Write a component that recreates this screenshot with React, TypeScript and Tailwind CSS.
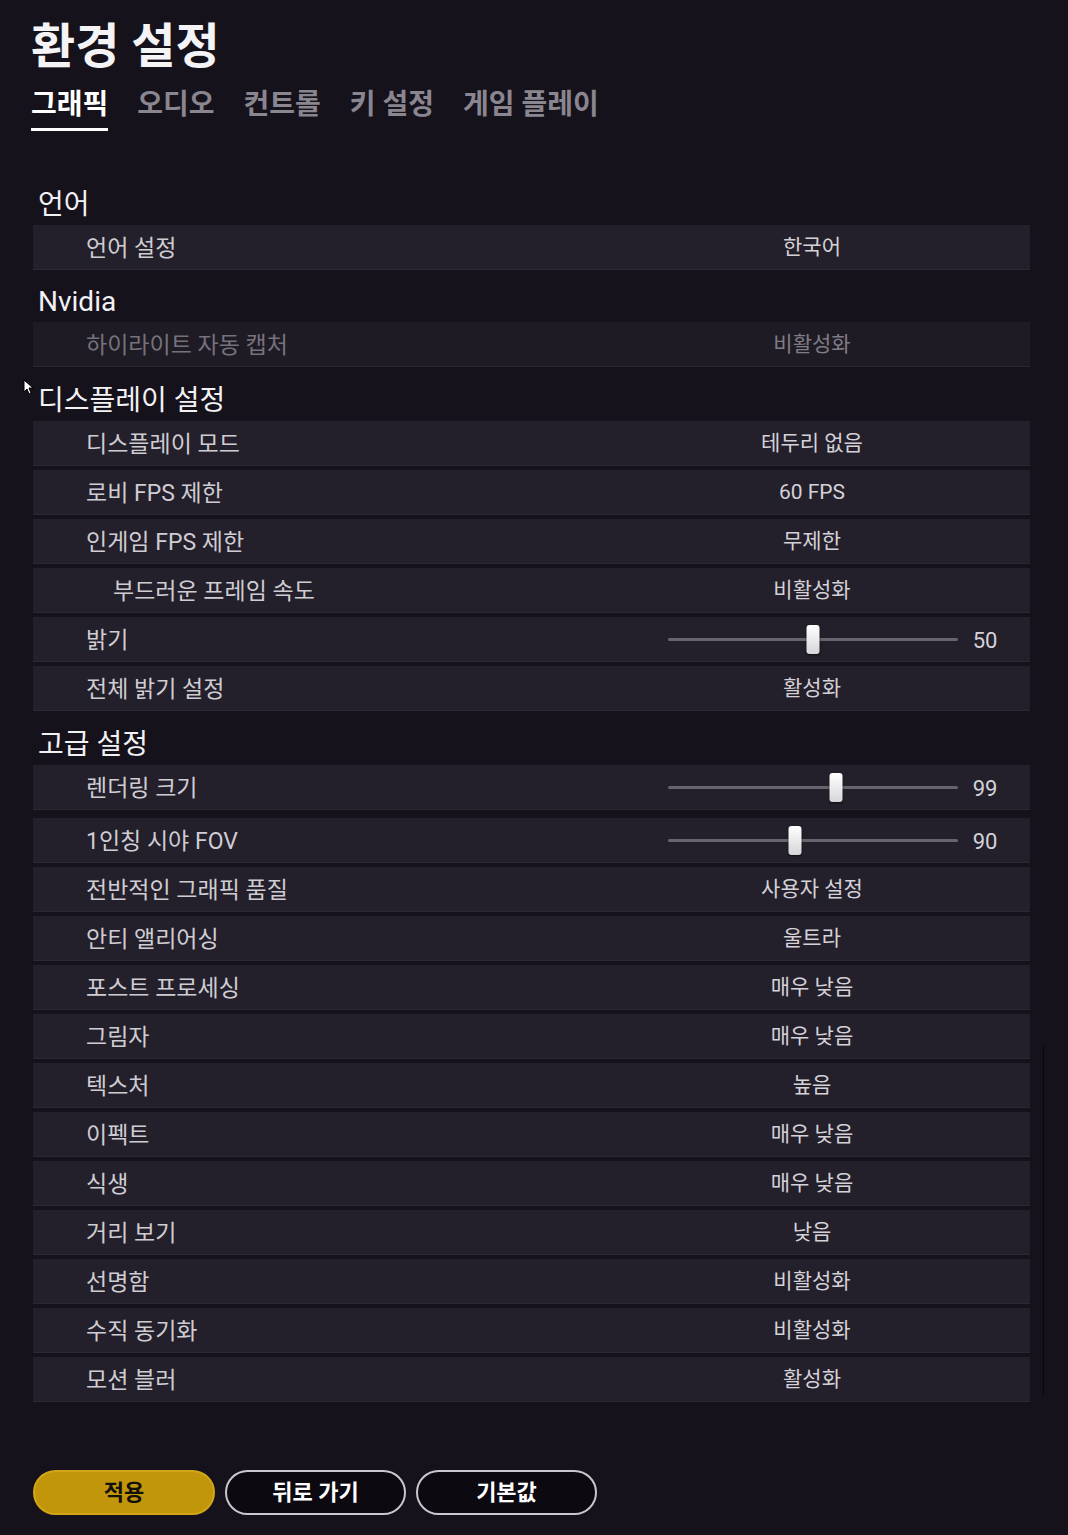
import React from "react";

type Row = {
  label: string;
  value?: string;
  slider?: { pos: number; num: string };
  indent?: boolean;
  disabled?: boolean;
  extraGap?: boolean;
};

type Section = { title: string; rows: Row[] };

const sections: Section[] = [
  { title: "언어", rows: [{ label: "언어 설정", value: "한국어" }] },
  { title: "Nvidia", rows: [{ label: "하이라이트 자동 캡처", value: "비활성화", disabled: true }] },
  {
    title: "디스플레이 설정",
    rows: [
      { label: "디스플레이 모드", value: "테두리 없음" },
      { label: "로비 FPS 제한", value: "60 FPS" },
      { label: "인게임 FPS 제한", value: "무제한" },
      { label: "부드러운 프레임 속도", value: "비활성화", indent: true },
      { label: "밝기", slider: { pos: 145, num: "50" } },
      { label: "전체 밝기 설정", value: "활성화" },
    ],
  },
  {
    title: "고급 설정",
    rows: [
      { label: "렌더링 크기", slider: { pos: 168, num: "99" }, extraGap: true },
      { label: "1인칭 시야 FOV", slider: { pos: 127, num: "90" } },
      { label: "전반적인 그래픽 품질", value: "사용자 설정" },
      { label: "안티 앨리어싱", value: "울트라" },
      { label: "포스트 프로세싱", value: "매우 낮음" },
      { label: "그림자", value: "매우 낮음" },
      { label: "텍스처", value: "높음" },
      { label: "이펙트", value: "매우 낮음" },
      { label: "식생", value: "매우 낮음" },
      { label: "거리 보기", value: "낮음" },
      { label: "선명함", value: "비활성화" },
      { label: "수직 동기화", value: "비활성화" },
      { label: "모션 블러", value: "활성화" },
    ],
  },
];

const tabs = ["그래픽", "오디오", "컨트롤", "키 설정", "게임 플레이"];

const SettingRow = ({ row }: { row: Row }) => (
  <div
    className={
      "flex h-[45px] items-center border-b border-[#2c2833] " +
      (row.disabled ? "bg-[#1f1b25] " : "bg-[#24202b] ") +
      (row.extraGap ? "mb-[4px]" : "")
    }
  >
    <div
      className={
        "flex-1 translate-y-[2px] text-[23px] " +
        (row.indent ? "pl-[80px] " : "pl-[53px] ") +
        (row.disabled ? "text-[#76727c]" : "text-[#cfcdd3]")
      }
    >
      {row.label}
    </div>
    {row.slider ? (
      <div className="flex w-[436px] items-center pl-[74px]">
        <div className="relative h-[3px] w-[290px] rounded-full bg-[#67646d]">
          <div
            className="absolute top-[-13px] h-[29px] w-[13px] -translate-x-1/2 rounded-[3px] bg-gradient-to-b from-[#ffffff] to-[#d6d6da] shadow-[0_1px_2px_rgba(0,0,0,0.6)]"
            style={{ left: row.slider.pos }}
          />
        </div>
        <div className="w-[54px] translate-y-[1px] text-center text-[22px] text-[#d4d2d8]">{row.slider.num}</div>
      </div>
    ) : (
      <div
        className={
          "w-[436px] translate-y-[1px] text-center text-[21px] " +
          (row.disabled ? "text-[#807c86]" : "text-[#d4d2d8]")
        }
      >
        {row.value}
      </div>
    )}
  </div>
);

export default function App() {
  return (
    <div className="relative min-h-[1535px] w-full bg-[#16121c] pl-[31px] pr-[38px] pt-[19px] font-[Roboto,'Noto_Sans_CJK_KR',sans-serif]">
      <h1 className="h-[56px] text-[48px] font-bold leading-[56px] text-[#f4f3f6]">환경 설정</h1>

      <div className="mt-[12px] flex items-start gap-[29px]">
        {tabs.map((t, i) => (
          <div
            key={t}
            className={
              "pb-[5px] text-[28px] font-bold leading-[36px] " +
              (i === 0 ? "border-b-[3px] border-white text-white" : "text-[#8a8690]")
            }
          >
            {t}
          </div>
        ))}
      </div>

      <div className="mt-[54px] pl-[2px]">
        {sections.map((s, si) => (
          <div key={s.title} className={si === 0 ? "" : si === 1 ? "mt-[12px]" : "mt-[14px]"}>
            <div className="mb-[4px] h-[36px] pl-[5px] pt-[2px] text-[28px] leading-[36px] text-[#f2f1f4]">{s.title}</div>
            <div className="flex flex-col gap-[4px]">
              {s.rows.map((r) => (
                <SettingRow key={r.label} row={r} />
              ))}
            </div>
          </div>
        ))}
      </div>

      <div className="mt-[68px] flex gap-[10px] pl-[2px]">
        <button className="h-[45px] w-[182px] rounded-full border-2 border-[#d2a616] bg-[#c2960b] text-[22px] font-bold text-[#14110a]">
          적용
        </button>
        <button className="h-[45px] w-[181px] rounded-full border-2 border-[#c9c7cc] bg-[#0c0a10] text-[22px] font-bold text-white">
          뒤로 가기
        </button>
        <button className="h-[45px] w-[181px] rounded-full border-2 border-[#c9c7cc] bg-[#0c0a10] text-[22px] font-bold text-white">
          기본값
        </button>
      </div>

      <div className="absolute left-[1043px] top-[1046px] h-[350px] w-[1px] bg-[#08060b]" />

      <svg className="absolute left-[23px] top-[379px]" width="10" height="16" viewBox="0 0 10 16">
        <path d="M1 1 L1 13 L4 10 L6 15 L8 14 L6 9 L10 9 Z" fill="#ffffff" stroke="#000000" strokeWidth="1" />
      </svg>
    </div>
  );
}
